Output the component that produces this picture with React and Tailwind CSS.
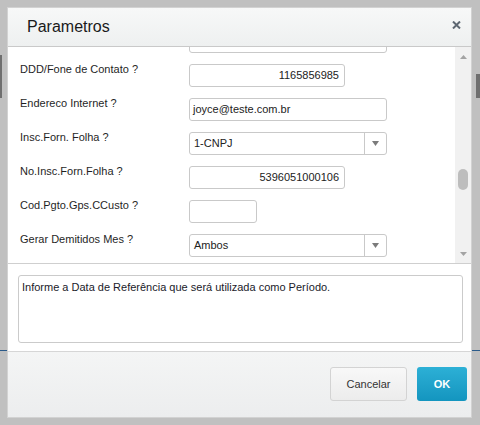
import React from 'react';

const rows = [
  { label: '', value: '', kind: 'input', width: 'w-[198px]' },
  { label: 'DDD/Fone de Contato ?', value: '1165856985', kind: 'input', width: 'w-[156px]', right: true },
  { label: 'Endereco Internet ?', value: 'joyce@teste.com.br', kind: 'input', width: 'w-[198px]' },
  { label: 'Insc.Forn. Folha ?', value: '1-CNPJ', kind: 'select' },
  { label: 'No.Insc.Forn.Folha ?', value: '5396051000106', kind: 'input', width: 'w-[156px]', right: true },
  { label: 'Cod.Pgto.Gps.CCusto ?', value: '', kind: 'input', width: 'w-[68px]' },
  { label: 'Gerar Demitidos Mes ?', value: 'Ambos', kind: 'select' },
];

const Field = ({ row }) => {
  if (row.kind === 'select') {
    return (
      <div className="flex h-[23px] w-[198px] items-stretch rounded-[3px] border border-[#c9c9c9] bg-white">
        <div className="flex flex-1 items-center pl-[4px] text-[11px] text-[#222]">{row.value}</div>
        <div className="flex w-[22px] items-center justify-center border-l border-[#c9c9c9]">
          <svg width="7" height="5" viewBox="0 0 7 5">
            <path d="M0 0 L7 0 L3.5 5 Z" fill="#7b7b7b" />
          </svg>
        </div>
      </div>
    );
  }
  return (
    <div
      className={`flex h-[23px] ${row.width} items-center rounded-[3px] border border-[#c9c9c9] bg-white text-[11px] text-[#222] ${row.right ? 'justify-end pr-[5px]' : 'pl-[3px]'}`}
    >
      {row.value}
    </div>
  );
};

export default function App() {
  return (
    <div className="relative h-[425px] w-[480px] overflow-hidden bg-[#c0c0c0] pl-[7px] pt-[7px] font-['Liberation_Sans',Arial,sans-serif]">
      {/* page behind the overlay */}
      <div className="absolute left-0 top-[55px] h-[43px] w-[2px] bg-[#6f6f6f]" />
      <div className="absolute right-0 top-[74px] h-[24px] w-[4px] bg-[#6f6f6f]" />
      <div className="absolute left-0 top-[350px] h-px w-[7px] bg-[#2b5b8a]" />
      <div className="absolute right-0 top-[350px] h-px w-[8px] bg-[#2b5b8a]" />

      {/* Dialog */}
      <div className="relative flex h-[411px] w-[465px] flex-col border border-[#d2d2d2] bg-white">
        {/* Header */}
        <div className="flex h-[39px] items-center justify-between border-b border-[#c9c9c9] bg-gradient-to-b from-[#f7f8f8] to-[#eef0f0] pl-[19px] pr-[10px]">
          <span className="text-[16px] text-[#1a1a1a]">Parametros</span>
          <svg width="9" height="8" viewBox="0 0 9 8" className="mb-[5px]">
            <path d="M1 0.5 L8 7.5 M8 0.5 L1 7.5" stroke="#5e6771" strokeWidth="2" />
          </svg>
        </div>

        {/* Parameter list */}
        <div className="flex h-[217px] border-b border-[#cfcfcf]">
          <div className="flex-1 overflow-hidden">
            <div className="-mt-[17px]">
              {rows.map((row, i) => (
                <div key={i} className="flex h-[34px] items-start">
                  <div className="-mt-[1px] w-[181px] pl-[12px] text-[11px] leading-[13px] text-[#1f1f1f]">{row.label}</div>
                  <Field row={row} />
                </div>
              ))}
            </div>
          </div>
          <div className="flex w-[16px] flex-col items-center justify-between bg-[#f1f1f1] pb-[7px] pt-[8px]">
            <svg width="7" height="4" viewBox="0 0 7 4">
              <path d="M0 4 L7 4 L3.5 0 Z" fill="#a3a3a3" />
            </svg>
            <div className="mr-[1px] mt-[110px] h-[21px] w-[10px] rounded-[5px] bg-[#bdbdbd]" />
            <div className="flex-1" />
            <svg width="7" height="4" viewBox="0 0 7 4">
              <path d="M0 0 L7 0 L3.5 4 Z" fill="#a3a3a3" />
            </svg>
          </div>
        </div>

        {/* Help text */}
        <div className="pb-[8px] pl-[10px] pr-[8px] pt-[11px]">
          <div className="h-[68px] rounded-[3px] border border-[#cbcbcb] pl-[3px] pt-[5px] text-[11px] leading-[13px] text-[#1a1a2a]">
            Informe a Data de Referência que será utilizada como Período.
          </div>
        </div>

        {/* Footer */}
        <div className="flex flex-1 items-start justify-end gap-[10px] border-t border-[#d6d6d6] bg-gradient-to-b from-[#f4f5f5] to-[#ecedee] pr-[4px] pt-[15px]">
          <button className="h-[34px] w-[77px] rounded-[3px] border border-[#d3d3d3] bg-gradient-to-b from-[#f8f8f8] to-[#ececec] text-[11px] text-[#333]">
            Cancelar
          </button>
          <button className="h-[34px] w-[50px] rounded-[3px] bg-gradient-to-b from-[#2cb0d6] to-[#1395bf] text-[11px] font-bold text-white">
            OK
          </button>
        </div>
      </div>
    </div>
  );
}
